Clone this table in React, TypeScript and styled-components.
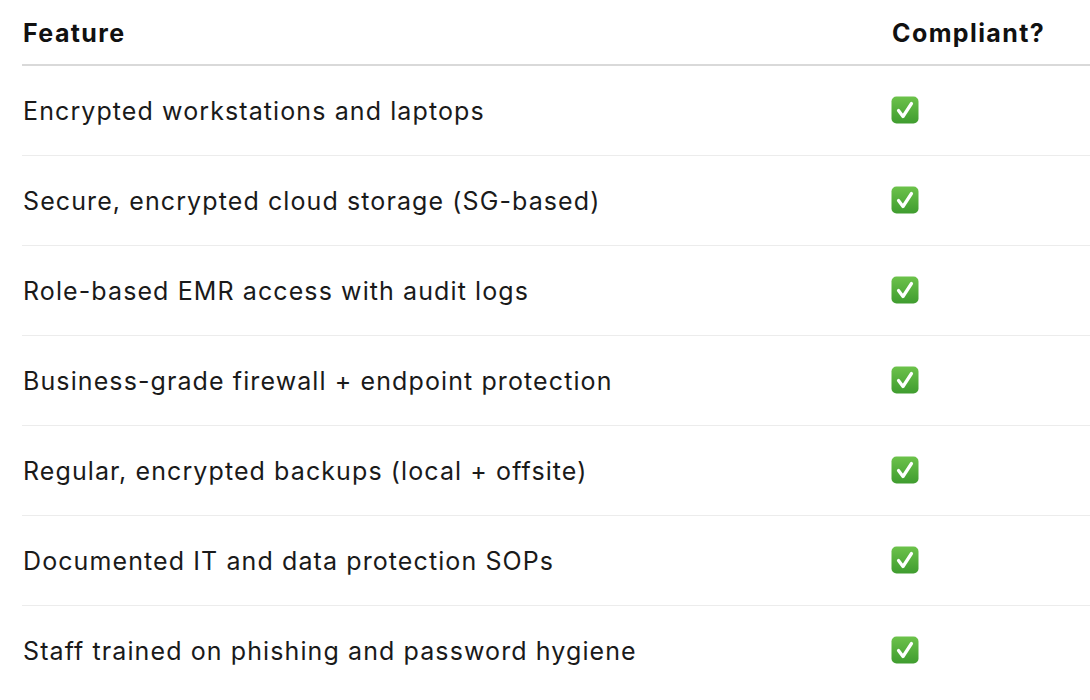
import * as React from 'react';
import styled, { createGlobalStyle } from 'styled-components';

const GlobalStyle = createGlobalStyle`
  html, body {
    margin: 0;
    padding: 0;
    background: #ffffff;
    overflow: hidden;
  }
  body {
    font-family: Inter, "Noto Sans", "Liberation Sans", sans-serif;
    color: #1d1d1f;
  }
`;

const Page = styled.div`
  padding-left: 22px;
  width: 1090px;
  box-sizing: border-box;
`;

const Table = styled.table`
  width: 1100px;
  border-collapse: collapse;
  table-layout: fixed;
`;

const HeadCell = styled.th<{ $width?: number }>`
  width: ${(p) => (p.$width ? `${p.$width}px` : 'auto')};
  height: 65px;
  padding: 2px 0 0 1px;
  text-align: left;
  vertical-align: middle;
  font-size: 25px;
  font-weight: 650;
  letter-spacing: 1.4px;
  color: #111111;
  border-bottom: 2px solid #d9d9d9;
  box-sizing: border-box;
`;

const Row = styled.tr`
  & + & td {
    border-top: 1px solid #ececec;
  }
`;

const Cell = styled.td`
  height: 89px;
  padding: 0 0 0 1px;
  vertical-align: middle;
  font-size: 25px;
  font-weight: 400;
  letter-spacing: 1.1px;
  color: #1a1a1a;
  white-space: nowrap;
`;

const CheckBox = styled.svg`
  display: block;
  width: 28px;
  height: 28px;
  margin: -1px 0 0 -1px;
`;

const features = [
  'Encrypted workstations and laptops',
  'Secure, encrypted cloud storage (SG-based)',
  'Role-based EMR access with audit logs',
  'Business-grade firewall + endpoint protection',
  'Regular, encrypted backups (local + offsite)',
  'Documented IT and data protection SOPs',
  'Staff trained on phishing and password hygiene',
];

const CheckIcon: React.FC = () => (
  <CheckBox viewBox="0 0 28 28" aria-label="✅">
    <defs>
      <linearGradient id="chk" x1="0" y1="0" x2="0" y2="1">
        <stop offset="0" stopColor="#6cc24a" />
        <stop offset="1" stopColor="#3f9c2f" />
      </linearGradient>
    </defs>
    <rect x="0.5" y="0.5" width="27" height="27" rx="5" fill="url(#chk)" />
    <path
      d="M7.5 14.5 L12 20.5 L20.5 7.5"
      fill="none"
      stroke="#ffffff"
      strokeWidth="3.2"
      strokeLinecap="round"
      strokeLinejoin="round"
    />
  </CheckBox>
);

const App: React.FC = () => (
  <Page>
    <GlobalStyle />
    <Table>
      <thead>
        <tr>
          <HeadCell $width={869}>Feature</HeadCell>
          <HeadCell>Compliant?</HeadCell>
        </tr>
      </thead>
      <tbody>
        {features.map((f) => (
          <Row key={f}>
            <Cell>{f}</Cell>
            <Cell>
              <CheckIcon />
            </Cell>
          </Row>
        ))}
      </tbody>
    </Table>
  </Page>
);

export default App;
